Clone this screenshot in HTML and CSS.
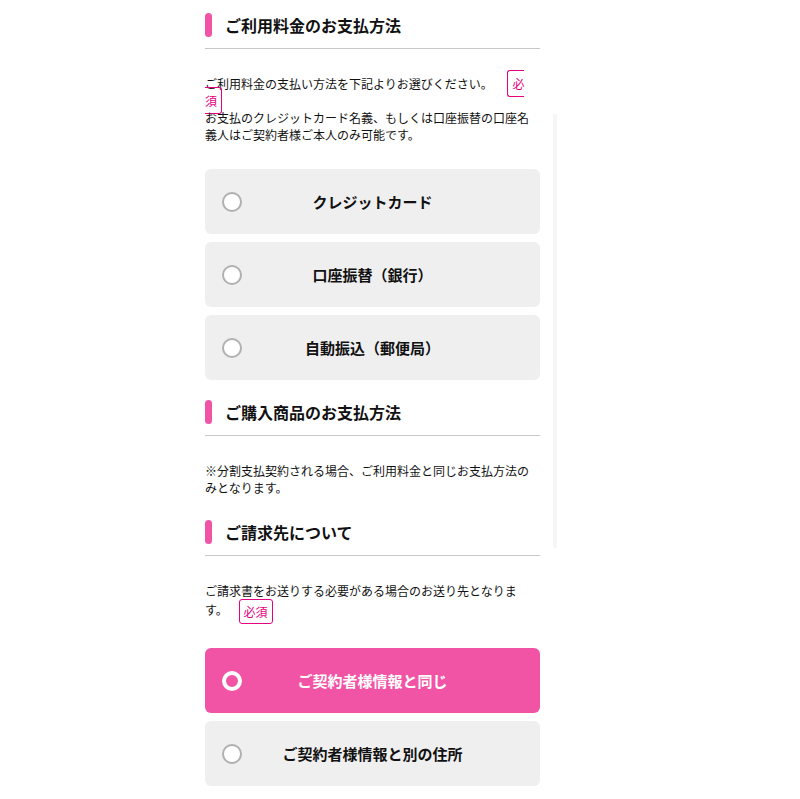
FILE: index.html
```html
<!DOCTYPE html>
<html lang="ja">
<head>
  <meta charset="UTF-8" />
  <meta name="viewport" content="width=device-width, initial-scale=1.0"/>
  <title>お支払方法</title>
  <link rel="stylesheet" href="styles.css">
</head>
<body>
  <div class="page">
    <div class="scroll-shadow"></div>

    <section class="section">
      <h2 class="section-title"><span class="title-bar"></span>ご利用料金のお支払方法</h2>
      <p class="note">ご利用料金の支払い方法を下記よりお選びください。 <span class="required">必須</span><br>お支払のクレジットカード名義、もしくは口座振替の口座名義人はご契約者様ご本人のみ可能です。</p>
      <div class="choices">
        <label class="choice"><span class="radio"></span><span class="choice-label">クレジットカード</span></label>
        <label class="choice"><span class="radio"></span><span class="choice-label">口座振替（銀行）</span></label>
        <label class="choice"><span class="radio"></span><span class="choice-label">自動振込（郵便局）</span></label>
      </div>
    </section>

    <section class="section">
      <h2 class="section-title"><span class="title-bar"></span>ご購入商品のお支払方法</h2>
      <p class="note">※分割支払契約される場合、ご利用料金と同じお支払方法のみとなります。</p>
    </section>

    <section class="section">
      <h2 class="section-title"><span class="title-bar"></span>ご請求先について</h2>
      <p class="note">ご請求書をお送りする必要がある場合のお送り先となりま<span class="keep">す。 <span class="required required-box">必須</span></span></p>
      <div class="choices choices-tight">
        <label class="choice is-checked"><span class="radio"></span><span class="choice-label">ご契約者様情報と同じ</span></label>
        <label class="choice"><span class="radio"></span><span class="choice-label">ご契約者様情報と別の住所</span></label>
      </div>
    </section>
  </div>
</body>
</html>
```

FILE: styles.css
```css
:root {
  --pink: #f254a5;
  --magenta: #e4007f;
  --gray-bg: #efefef;
  --text: #111;
}

* {
  box-sizing: border-box;
}

body {
  margin: 0;
  background: #fff;
  color: var(--text);
  font-family: "Noto Sans CJK JP", "Noto Sans", sans-serif;
}

.page {
  position: relative;
  width: 335px;
  margin-left: 205px;
  padding-top: 13px;
}

.scroll-shadow {
  position: absolute;
  left: 348px;
  top: 114px;
  width: 4px;
  height: 434px;
  background: #f6f6f6;
}

.section + .section {
  margin-top: 20px;
}

.section-title {
  display: flex;
  align-items: center;
  gap: 13px;
  margin: 0;
  padding-bottom: 11px;
  border-bottom: 1px solid #c8c8c8;
  font-size: 16px;
  line-height: 24px;
  font-weight: bold;
}

.title-bar {
  width: 7px;
  height: 24px;
  border-radius: 4px;
  background: var(--pink);
}

.note {
  margin: 26px 0 0;
  font-size: 12px;
  line-height: 17px;
}

.note:last-child {
  padding-bottom: 4px;
}

.keep {
  white-space: nowrap;
}

.required {
  margin-left: 12px;
  padding: 4px 4px;
  border: 1px solid var(--magenta);
  border-radius: 3px;
  color: var(--magenta);
}

.required-box {
  display: inline-block;
  line-height: 15px;
  vertical-align: middle;
  margin-left: 8px;
}

.choices {
  display: flex;
  flex-direction: column;
  gap: 8px;
  margin-top: 26px;
}

.choices-tight {
  margin-top: 24px;
}

.choice {
  display: grid;
  grid-template-columns: 1fr auto 1fr;
  align-items: center;
  height: 65px;
  padding: 0 17px;
  border-radius: 6px;
  background: var(--gray-bg);
  cursor: pointer;
}

.radio {
  width: 20px;
  height: 20px;
  border: 2px solid #b0b0b0;
  border-radius: 50%;
  background: #fff;
}

.choice-label {
  font-size: 15px;
  font-weight: bold;
  text-align: center;
}

.choice.is-checked {
  background: var(--pink);
  color: #fff;
}

.choice.is-checked .radio {
  border: 4px solid #fff;
  background: var(--pink);
}
```
